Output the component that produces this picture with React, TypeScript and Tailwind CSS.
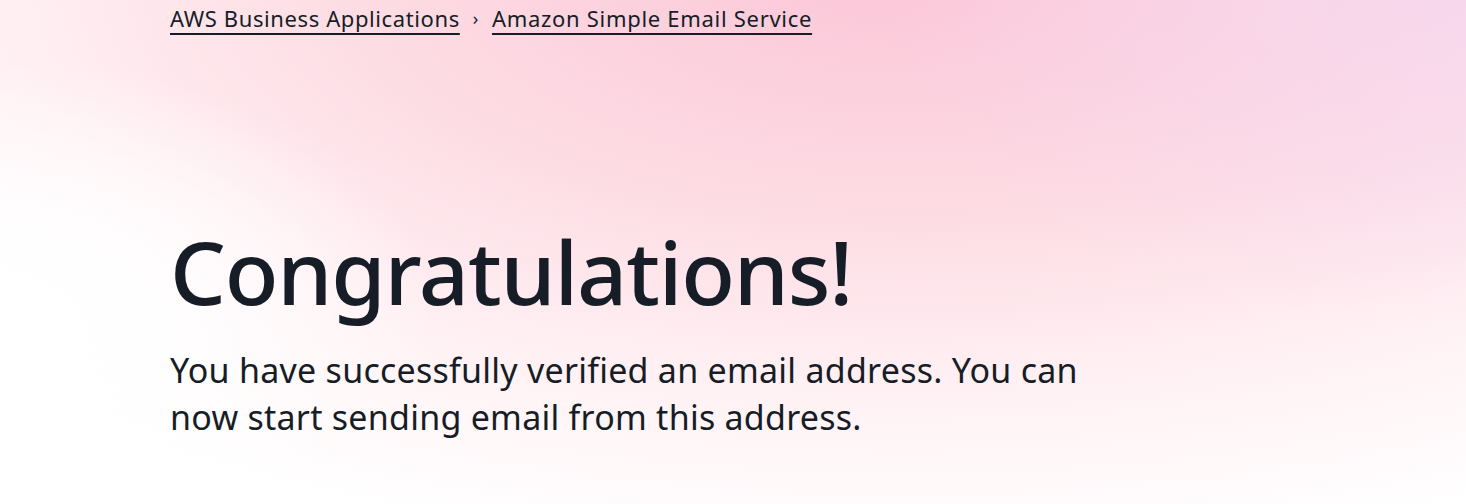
export default function App() {
  return (
    <div className="min-h-[504px] w-full bg-[radial-gradient(ellipse_30%_50%_at_0%_62%,#ffffff_0%,rgba(255,255,255,0.85)_40%,rgba(255,255,255,0)_100%),radial-gradient(ellipse_40%_65%_at_100%_0%,rgba(246,214,238,0.85)_0%,rgba(246,214,238,0)_100%),radial-gradient(ellipse_90%_115%_at_62%_-5%,#fbc6d8_0%,#fddbe3_40%,#fff0f3_70%,#ffffff_100%)] font-['Noto_Sans',sans-serif] text-[#161d26]">
      <div className="pl-[170px]">
        {/* breadcrumbs */}
        <nav className="flex items-center pt-[3px] text-[22px] leading-[30px] tracking-[0.6px]">
          <a
            href="#"
            className="underline decoration-2 underline-offset-[6px]"
          >
            AWS Business Applications
          </a>
          <span className="mx-[13px] text-[18px]">›</span>
          <a
            href="#"
            className="underline decoration-2 underline-offset-[6px] tracking-[0.7px]"
          >
            Amazon Simple Email Service
          </a>
        </nav>

        <h1 className="mt-[194px] text-[88px] leading-[88px] font-medium tracking-[-1.2px]">
          Congratulations!
        </h1>

        <p className="mt-[32px] max-w-[940px] text-[34px] leading-[47px] tracking-[0.25px]">
          You have successfully verified an email address. You can now start
          sending email from this address.
        </p>
      </div>
    </div>
  );
}
